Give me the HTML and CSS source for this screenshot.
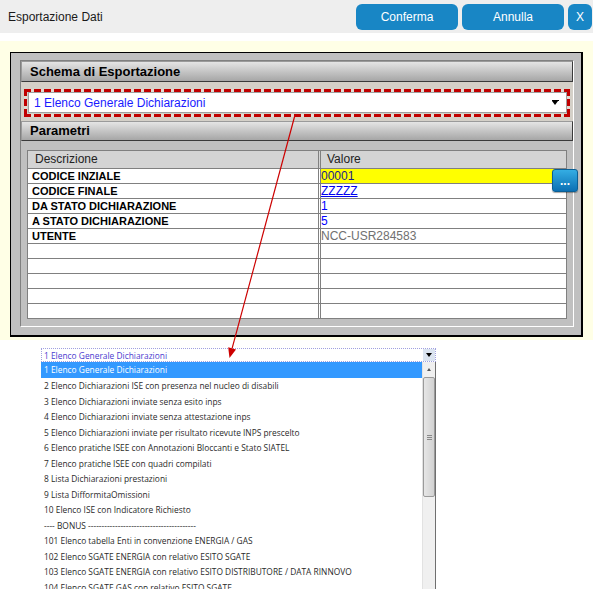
FILE: index.html
```html
<!DOCTYPE html>
<html>
<head>
<meta charset="utf-8">
<title>Esportazione Dati</title>
<link rel="stylesheet" href="styles.css">
</head>
<body>
<div class="page">
  <header class="topbar">
    <div class="title">Esportazione Dati</div>
    <div class="actions">
      <button class="btn btn-wide">Conferma</button>
      <button class="btn btn-wide">Annulla</button>
      <button class="btn btn-x">X</button>
    </div>
  </header>
  <div class="sep"></div>
  <main class="content">
    <section class="panel">
      <div class="inner">
        <div class="bar bar-first">Schema di Esportazione</div>
        <div class="select-zone">
          <div class="dashed">
            <div class="select">
              <span class="select-text">1 Elenco Generale Dichiarazioni</span>
              <span class="caret"></span>
            </div>
          </div>
        </div>
        <div class="bar">Parametri</div>
        <div class="table-zone">
          <div class="params">
            <div class="c d h">Descrizione</div>
            <div class="c v h">Valore</div>

            <div class="c d">CODICE INZIALE</div>
            <div class="c v hl"><span class="val-dark">00001</span><button class="more">...</button></div>

            <div class="c d">CODICE FINALE</div>
            <div class="c v"><span class="val-link">ZZZZZ</span></div>

            <div class="c d">DA STATO DICHIARAZIONE</div>
            <div class="c v"><span class="val-blue">1</span></div>

            <div class="c d">A STATO DICHIARAZIONE</div>
            <div class="c v"><span class="val-blue">5</span></div>

            <div class="c d">UTENTE</div>
            <div class="c v"><span class="val-gray">NCC-USR284583</span></div>

            <div class="c d"></div><div class="c v"></div>
            <div class="c d"></div><div class="c v"></div>
            <div class="c d"></div><div class="c v"></div>
            <div class="c d"></div><div class="c v"></div>
            <div class="c d"></div><div class="c v"></div>
          </div>
        </div>
      </div>
    </section>
  </main>

  <div class="dd">
    <div class="dd-select">
      <span class="dd-select-text">1 Elenco Generale Dichiarazioni</span>
      <span class="dd-btn"><span class="dd-tri"></span></span>
    </div>
    <div class="dd-list">
      <div class="dd-items">
        <div class="it sel">1 Elenco Generale Dichiarazioni</div>
        <div class="it">2 Elenco Dichiarazioni ISE con presenza nel nucleo di disabili</div>
        <div class="it">3 Elenco Dichiarazioni inviate senza esito inps</div>
        <div class="it">4 Elenco Dichiarazioni inviate senza attestazione inps</div>
        <div class="it">5 Elenco Dichiarazioni inviate per risultato ricevute INPS prescelto</div>
        <div class="it">6 Elenco pratiche ISEE con Annotazioni Bloccanti e Stato SIATEL</div>
        <div class="it">7 Elenco pratiche ISEE con quadri compilati</div>
        <div class="it">8 Lista Dichiarazioni prestazioni</div>
        <div class="it">9 Lista DifformitaOmissioni</div>
        <div class="it">10 Elenco ISE con Indicatore Richiesto</div>
        <div class="it">---- BONUS ----------------------------------------</div>
        <div class="it">101 Elenco tabella Enti in convenzione ENERGIA / GAS</div>
        <div class="it">102 Elenco SGATE ENERGIA con relativo ESITO SGATE</div>
        <div class="it">103 Elenco SGATE ENERGIA con relativo ESITO DISTRIBUTORE / DATA RINNOVO</div>
        <div class="it">104 Elenco SGATE GAS con relativo ESITO SGATE</div>
      </div>
      <div class="dd-scroll">
        <div class="sb-up"><span class="sb-tri"></span></div>
        <div class="sb-thumb"><span class="grip"></span></div>
      </div>
    </div>
  </div>

  <svg class="arrow" width="596" height="589" viewBox="0 0 596 589">
    <line x1="295" y1="115" x2="232.1" y2="348.4" stroke="#cc0000" stroke-width="1.2"/>
    <polygon points="229.5,358 236,349.4 228.2,347.3" fill="#cc0000"/>
  </svg>
</div>
</body>
</html>
```

FILE: styles.css
```css
* { box-sizing: border-box; }
html, body { margin: 0; padding: 0; }
body {
  background: #ffffff;
  font-family: "Liberation Sans", Arial, sans-serif;
  width: 596px;
  height: 589px;
  overflow: hidden;
}
.page { position: relative; width: 593px; height: 589px; }

/* top bar */
.topbar {
  height: 33px;
  background: #eeeeee;
  display: flex;
  align-items: center;
  justify-content: space-between;
  padding: 0 1px 0 8px;
}
.title { font-size: 12px; color: #1a1a1a; }
.actions { display: flex; gap: 4px; }
.btn {
  height: 26px;
  border: 0;
  border-radius: 6px;
  background: #1886c5;
  color: #ffffff;
  font-family: "Liberation Sans", Arial, sans-serif;
  font-size: 12px;
  padding: 0;
}
.btn-wide { width: 102px; }
.btn-x { width: 24px; }
.sep { height: 8px; }

/* yellow content */
.content {
  background: #ffffe6;
  padding: 11px 10px 3px 10px;
}
.panel {
  border: 1px solid #000;
  border-right-width: 2px;
  border-bottom-width: 2px;
  background: #c0c0c0;
  padding: 7px 7px 8px 9px;
}
.inner {
  border: 1px solid;
  border-color: #808080 #ffffff #ffffff #808080;
}
.bar {
  height: 20px;
  background: linear-gradient(#e4e4e4, #a6a6a6);
  border: 1px solid;
  border-color: #9a9a9a #3a3a3a #3a3a3a #9a9a9a;
  font-size: 13px;
  font-weight: bold;
  color: #000;
  line-height: 18px;
  padding-left: 8px;
}
.bar-first { height: 21px; line-height: 19px; }

.select-zone {
  background: #d4d0c8;
  padding: 7px 3px 4px 3px;
}
.dashed {
  height: 28px;
  padding: 3px 3px 3px 4px;
  background:
    repeating-linear-gradient(90deg, #c00000 0 7px, #e2dad2 7px 10px) top left / 100% 3px no-repeat,
    repeating-linear-gradient(90deg, #c00000 0 7px, #e2dad2 7px 10px) bottom left / 100% 3px no-repeat,
    repeating-linear-gradient(180deg, #c00000 0 7px, #e2dad2 7px 10px) top left / 3px 100% no-repeat,
    repeating-linear-gradient(180deg, #c00000 0 7px, #e2dad2 7px 10px) top right / 3px 100% no-repeat,
    #d4d0c8;
}
.select {
  height: 21px;
  background: #ffffff;
  border: 1px solid #a0a0a0;
  display: flex;
  align-items: center;
  padding: 0 7px 0 5px;
}
.select-text { font-size: 12px; color: #1a1aff; flex: 1; }
.caret {
  width: 7px;
  height: 5px;
  border-top: 1px solid #000;
  position: relative;
}
.caret::after {
  content: "";
  position: absolute;
  left: 0;
  top: 0;
  border-left: 3.5px solid transparent;
  border-right: 3.5px solid transparent;
  border-top: 4px solid #000;
}

.table-zone {
  background: #c0c0c0;
  padding: 9px 6px 7px 6px;
}
.params {
  border: 1px solid #808080;
  border-bottom: 0;
  display: grid;
  grid-template-columns: 293px 1fr;
  background: #ffffff;
}
.c {
  height: 15px;
  border-bottom: 1px solid #808080;
  line-height: 14px;
  white-space: nowrap;
}
.c.d {
  border-right: 3px double #808080;
  padding-left: 4px;
  font-size: 11px;
  font-weight: bold;
  color: #000;
}
.c.v { font-size: 12px; padding-left: 0; position: relative; }
.c.h {
  height: 18px;
  line-height: 17px;
  background: #d4d4d4;
  font-size: 12px;
  font-weight: normal;
  color: #222;
  padding-left: 7px;
}
.c.v.h { padding-left: 6px; }
.hl { background: #ffff00; }
.val-dark { color: #1c1c8c; }
.val-link { color: #0000ee; text-decoration: underline; }
.val-blue { color: #0000ff; }
.val-gray { color: #707070; }
.more {
  position: absolute;
  top: 0;
  right: -12px;
  width: 26px;
  height: 23px;
  border: 1px solid #0a5f95;
  border-radius: 3px;
  background: linear-gradient(#34ade3, #0c70b4);
  box-shadow: 0 1px 1px rgba(0,0,0,0.35);
  color: #ffffff;
  font-family: "Liberation Sans", Arial, sans-serif;
  font-size: 12px;
  font-weight: bold;
  padding: 0;
  line-height: 20px;
}

/* dropdown screenshot */
.dd {
  margin: 8px 0 0 41px;
  width: 395px;
  font-family: "Open Sans", "Liberation Sans", sans-serif;
}
.dd-select {
  height: 14px;
  border: 1px dotted #a0a0e0;
  display: flex;
  align-items: center;
  padding-left: 2px;
}
.dd-select-text { flex: 1; font-size: 8.4px; color: #4a3ccf; }
.dd-btn {
  width: 12px;
  height: 12px;
  background: #dbe4f0;
  display: flex;
  align-items: center;
  justify-content: center;
}
.dd-tri {
  border-left: 3px solid transparent;
  border-right: 3px solid transparent;
  border-top: 4px solid #000;
}
.dd-list {
  display: flex;
  height: 227px;
  overflow: hidden;
}
.dd-items { flex: 1; }
.it {
  height: 15.5px;
  line-height: 15.5px;
  padding-left: 3px;
  font-size: 8.4px;
  color: #2a2a2a;
  white-space: nowrap;
}
.it.sel { height: 16px; line-height: 16px; background: #3399ff; color: #ffffff; }
.dd-scroll {
  width: 14px;
  background: #f0f0f0;
  border-right: 1px solid #6f6f6f;
  border-left: 1px solid #e2e2e2;
}
.sb-up {
  height: 14px;
  display: flex;
  align-items: center;
  justify-content: center;
}
.sb-tri {
  border-left: 2.5px solid transparent;
  border-right: 2.5px solid transparent;
  border-bottom: 3px solid #555;
}
.sb-thumb {
  margin-top: 1px;
  height: 120px;
  border: 1px solid #9a9a9a;
  border-radius: 2px;
  background: linear-gradient(90deg, #e6e6e6, #d2d2d2);
  display: flex;
  align-items: center;
  justify-content: center;
}
.grip {
  width: 5px;
  height: 5px;
  background: repeating-linear-gradient(#888 0 1px, transparent 1px 2px);
}

.arrow {
  position: absolute;
  left: 0;
  top: 0;
  pointer-events: none;
}
```
